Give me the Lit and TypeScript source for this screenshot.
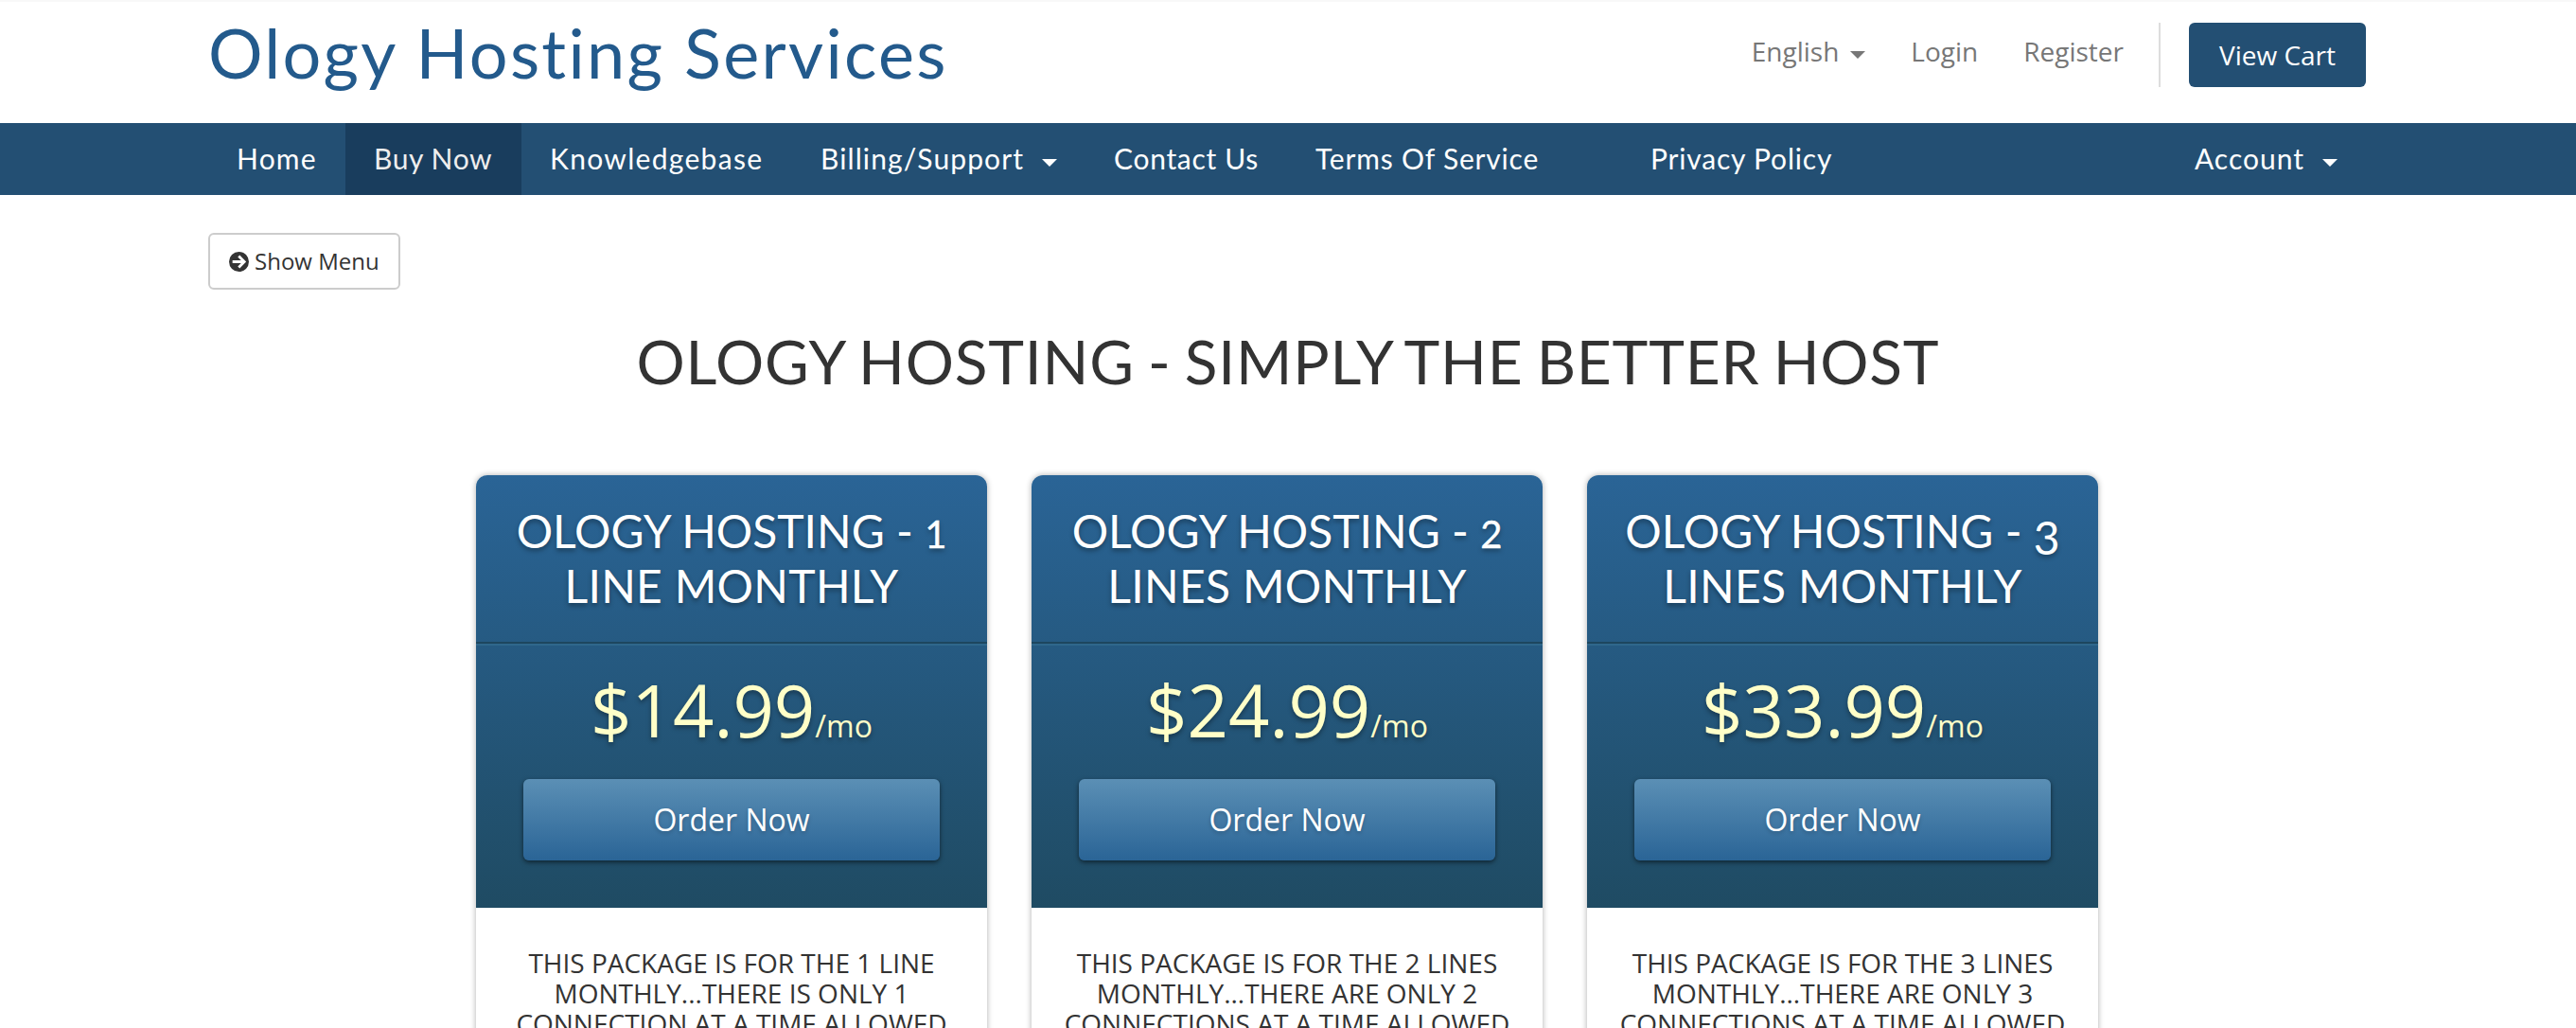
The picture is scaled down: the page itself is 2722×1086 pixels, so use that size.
import { LitElement, css, html } from "lit";
import { customElement } from "lit/decorators.js";
import { classMap } from "lit/directives/class-map.js";

interface NavItem {
	id: string;
	label: string;
	caret?: boolean;
	active?: boolean;
}

interface Plan {
	count: string;
	noun: string;
	price: string;
	lines: string[];
}

const NAV: NavItem[] = [
	{ id: "home", label: "Home" },
	{ id: "buy", label: "Buy Now", active: true },
	{ id: "kb", label: "Knowledgebase" },
	{ id: "billing", label: "Billing/Support", caret: true },
	{ id: "contact", label: "Contact Us" },
	{ id: "terms", label: "Terms Of Service" },
	{ id: "privacy", label: "Privacy Policy" },
	{ id: "account", label: "Account", caret: true },
];

const PLANS: Plan[] = [
	{
		count: "1",
		noun: "LINE",
		price: "$14.99",
		lines: ["THIS PACKAGE IS FOR THE 1 LINE", "MONTHLY...THERE IS ONLY 1", "CONNECTION AT A TIME ALLOWED"],
	},
	{
		count: "2",
		noun: "LINES",
		price: "$24.99",
		lines: ["THIS PACKAGE IS FOR THE 2 LINES", "MONTHLY...THERE ARE ONLY 2", "CONNECTIONS AT A TIME ALLOWED"],
	},
	{
		count: "3",
		noun: "LINES",
		price: "$33.99",
		lines: ["THIS PACKAGE IS FOR THE 3 LINES", "MONTHLY...THERE ARE ONLY 3", "CONNECTIONS AT A TIME ALLOWED"],
	},
];

@customElement("plan-card")
class PlanCard extends LitElement {
	static properties = {
		plan: { attribute: false },
	};
	static styles = css`
		:host {
			display: block;
			box-sizing: border-box;
			width: 540px;
			height: 700px;
			border-radius: 12px;
			background: #fff;
			box-shadow: 0 0 6px rgba(0, 0, 0, 0.32);
			overflow: hidden;
			text-align: center;
		}
		.head {
			height: 457px;
			background: linear-gradient(#2a6496, #1f4b63);
			text-shadow: 0 3px 5px rgba(0, 0, 0, 0.35);
		}
		.title {
			box-sizing: border-box;
			height: 178px;
			margin: 0;
			padding-top: 30px;
			border-bottom: 2px solid #1d465f;
			color: #fff;
			font: 400 48px/58px Lato, sans-serif;
			white-space: nowrap;
		}
		.title span {
			display: block;
		}
		.period {
			letter-spacing: 0.3px;
		}
		/* old-style figures: 1 and 2 sit at x-height, 3 drops below the baseline */
		.title i {
			display: inline-block;
			font-style: normal;
			line-height: 40px;
		}
		.small {
			font-size: 40px;
			-webkit-text-stroke: 0.4px #fff;
		}
		.low {
			transform: translateY(7px);
		}
		.pricing {
			box-sizing: border-box;
			height: 279px;
			border-top: 2px solid #2f678b;
			padding: 17px 50px 0;
		}
		.price {
			height: 124px;
			color: #ffffc8;
			font-size: 76px;
			line-height: 101px;
		}
		.price small {
			font-size: 32px;
		}
		.order {
			display: block;
			width: 100%;
			height: 86px;
			border: 0;
			border-radius: 6px;
			background: linear-gradient(#5b8fb5, #2a6496);
			box-shadow: 0 2px 5px rgba(0, 0, 0, 0.55);
			color: #fff;
			font: 32px/86px "Open Sans", sans-serif;
			text-shadow: 0 2px 4px rgba(0, 0, 0, 0.2);
			padding: 0;
		}
		.features {
			padding-top: 42px;
			color: #333;
			font-size: 28px;
			line-height: 32px;
			white-space: nowrap;
		}
	`;

	declare plan: Plan;

	render() {
		const { count, noun, price, lines } = this.plan;
		const low = count === "3";
		return html`
			<div class="head">
				<h2 class="title">
					<span>OLOGY HOSTING - <i class=${classMap({ low, small: !low })}>${count}</i></span>
					<span class="period">${noun} MONTHLY</span>
				</h2>
				<div class="pricing">
					<div class="price">${price}<small>/mo</small></div>
					<button class="order">Order Now</button>
				</div>
			</div>
			<div class="features">${lines.map((line) => html`<div>${line}</div>`)}</div>
		`;
	}
}

@customElement("app-root")
class AppRoot extends LitElement {
	static styles = css`
		:host {
			display: block;
			height: 1086px;
			overflow: hidden;
			background: #fff;
			color: #333;
			font-family: "Open Sans", sans-serif;
		}
		.container {
			width: 2280px;
			margin-left: 220px;
			display: flex;
		}
		header {
			box-sizing: border-box;
			height: 130px;
			border-top: 2px solid #f8f8f8;
		}
		.logo {
			color: #235a8c;
			font: 400 72px/106px Lato, sans-serif;
			letter-spacing: 2.3px;
			margin-right: auto;
			white-space: nowrap;
		}
		.top {
			display: flex;
			margin-top: 22px;
			height: 68px;
			color: #777;
			font-size: 28px;
			line-height: 60px;
		}
		.top a {
			margin-right: 48px;
		}
		.caret {
			display: inline-block;
			border: 8px solid transparent;
			border-top-color: currentColor;
			border-bottom: 0;
			vertical-align: middle;
			margin-left: 12px;
		}
		.top .register {
			margin-right: 37px;
		}
		.cart {
			border-left: 2px solid #ddd;
			padding-left: 30px;
		}
		.cart button {
			width: 187px;
			height: 68px;
			border: 0;
			border-radius: 6px;
			background: #234f73;
			color: #fff;
			font: 28px/68px "Open Sans", sans-serif;
			padding: 0;
		}
		nav {
			background: #234f73;
			color: #fff;
			font: 400 30px/74px Lato, sans-serif;
		}
		nav a {
			box-sizing: border-box;
			height: 76px;
			padding: 0 0 0 30px;
			white-space: nowrap;
		}
		nav .caret {
			margin-left: 19px;
			margin-top: 2px;
		}
		.active {
			background: #193d5d;
			color: #eee;
		}
		.home {
			width: 145px;
			letter-spacing: 1.2px;
		}
		.buy {
			width: 186px;
			letter-spacing: 0.6px;
		}
		.kb {
			width: 286px;
			letter-spacing: 1.3px;
		}
		.billing {
			width: 310px;
			letter-spacing: 1.1px;
		}
		.contact {
			width: 213px;
			letter-spacing: 0.7px;
		}
		.terms {
			width: 354px;
			letter-spacing: 0.8px;
		}
		.privacy {
			letter-spacing: 0.8px;
		}
		.account {
			margin-left: auto;
			padding-right: 30px;
			letter-spacing: 1px;
		}
		.menu {
			box-sizing: border-box;
			display: flex;
			align-items: center;
			width: 203px;
			height: 60px;
			margin-top: 40px;
			border: 2px solid #ccc;
			border-radius: 6px;
			background: #fff;
			color: #333;
			font: 24px/34px "Open Sans", sans-serif;
			padding: 0 0 0 20px;
			white-space: nowrap;
		}
		.menu svg {
			width: 21px;
			height: 21px;
			margin-right: 6px;
		}
		h1 {
			margin: 36px 0 0;
			height: 160px;
			text-align: center;
			font: 400 64px/80px Lato, sans-serif;
			letter-spacing: 0.8px;
			word-spacing: -3px;
			white-space: nowrap;
		}
		.plans {
			display: flex;
			gap: 47px;
			padding-left: 503px;
		}
	`;

	#renderNavItem({ id, label, caret, active }: NavItem) {
		return html`<a class=${classMap({ [id]: true, active: !!active })}>${label}${caret ? html`<span class="caret"></span>` : null}</a>`;
	}

	render() {
		return html`
			<header>
				<div class="container">
					<div class="logo">Ology Hosting Services</div>
					<div class="top">
						<a>English<span class="caret"></span></a>
						<a>Login</a>
						<a class="register">Register</a>
						<div class="cart"><button>View Cart</button></div>
					</div>
				</div>
			</header>
			<nav>
				<div class="container">${NAV.map((item) => this.#renderNavItem(item))}</div>
			</nav>
			<div class="container">
				<button class="menu">
					<svg viewBox="0 0 20 20">
						<circle cx="10" cy="10" r="10" fill="#333" />
						<path d="M3.5 10H15M9.8 4.3L15.4 10L9.8 15.7" fill="none" stroke="#fff" stroke-width="2.7" />
					</svg>
					Show Menu
				</button>
			</div>
			<h1>OLOGY HOSTING - SIMPLY THE BETTER HOST</h1>
			<div class="plans">${PLANS.map((plan) => html`<plan-card .plan=${plan}></plan-card>`)}</div>
		`;
	}
}
